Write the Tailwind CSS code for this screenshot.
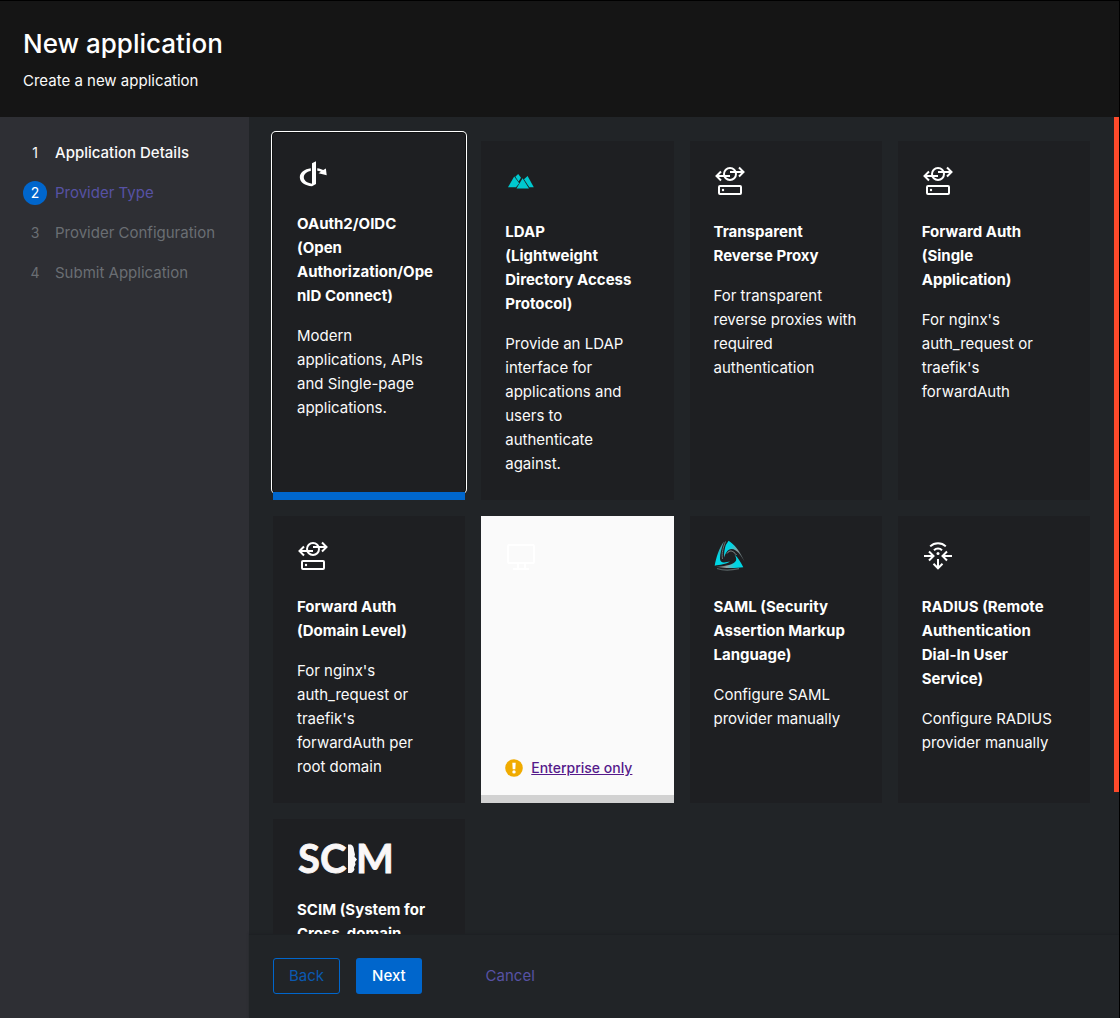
<!DOCTYPE html>
<html lang="en">
<head>
<meta charset="utf-8">
<meta name="viewport" content="width=device-width, initial-scale=1">
<title>New application</title>
<script src="https://cdn.jsdelivr.net/npm/@tailwindcss/browser@4"></script>
</head>
<body class="flex h-screen flex-col overflow-hidden border-t border-r border-black bg-[#212427] font-['Inter',sans-serif] text-[15px] leading-6 text-[#fafafa]">

<svg class="hidden" aria-hidden="true">
  <symbol id="proxy" viewBox="0 0 32 30">
    <g fill="none" stroke="#fff" stroke-width="2">
      <circle cx="16" cy="9" r="6"/>
      <path d="M16 11H3M7 6.500L2.500 11L7 15.500M16 7H29M25 2.500L29.500 7L25 11.500"/>
      <rect x="5" y="21" width="22" height="8" rx="1"/>
    </g>
    <circle cx="9" cy="25" r="1.200" fill="#fff"/>
  </symbol>
</svg>

<header class="bg-[#151515] px-[23px] pt-6 pb-6">
  <h1 class="text-[26px] leading-[38px] font-medium text-white">New application</h1>
  <p class="mt-1.5">Create a new application</p>
</header>

<div class="flex min-h-0 flex-1">
  <nav class="w-[249px] shrink-0 bg-[#2e2f34] px-[23px] pt-6" aria-label="Steps">
    <ol class="flex flex-col gap-4">
      <li class="flex items-center gap-2 font-medium"><span class="w-6 text-center text-sm font-normal">1</span><a href="#details">Application Details</a></li>
      <li class="flex items-center gap-2"><span class="flex size-6 items-center justify-center rounded-full bg-[#06c] text-sm text-white">2</span><a href="#type" aria-current="step" class="text-[#5752a4]">Provider Type</a></li>
      <li class="flex items-center gap-2 text-[#6a6e73]"><span class="w-6 text-center text-sm">3</span>Provider Configuration</li>
      <li class="flex items-center gap-2 text-[#6a6e73]"><span class="w-6 text-center text-sm">4</span>Submit Application</li>
    </ol>
  </nav>

  <main class="flex min-w-0 flex-1 flex-col">
    <div class="flex min-h-0 flex-1">
      <div class="min-w-0 flex-1 overflow-y-auto p-6 [scrollbar-width:none]">
        <div class="grid grid-cols-2 gap-4 wrap-anywhere lg:grid-cols-4">

          <label class="relative -mt-2 flex flex-col">
            <input type="radio" name="provider" class="sr-only" checked>
            <span class="block flex-1 rounded-[3px] bg-[#1e1f22] px-6 pt-6 shadow-[0_0_0_1px_#101112,0_0_0_2px_#fff]">
              <svg class="h-[31px] w-8" viewBox="0 0 32 31" fill="#fff" aria-hidden="true">
                <path d="M15 6.300L19 4.300V27L15 29.300Z"/>
                <path d="M15 29.300C8 28.800 2.800 25.500 2.800 20.300C2.800 15.500 7.500 12 13.800 11.300V13.900C9.500 14.700 6.800 17 6.800 20.300C6.800 23.700 10 26 15 26.700Z"/>
                <path d="M20.300 11.300C22.700 11.600 24.600 12.200 26.200 13.100L28.900 11.600L29.700 18.300L21.500 16.200L23.900 14.800C22.900 14.300 21.600 13.900 20.300 13.800Z"/>
              </svg>
              <b class="mt-6 block text-white">OAuth2/OIDC (Open Authorization/OpenID Connect)</b>
              <span class="mt-4 block">Modern applications, APIs and Single-page applications.</span>
            </span>
            <span class="relative h-2 bg-[#06c]"></span>
          </label>

          <label class="relative block bg-[#1e1f22] p-6">
            <input type="radio" name="provider" class="sr-only">
            <svg class="h-[31px] w-8" viewBox="0 0 32 31" fill="#00c8cf" aria-hidden="true">
              <path d="M3 22.200L9.200 11.600L14.200 18.300L11 22.200Z"/>
              <path d="M10.300 11.800L13.200 8.900L16 12.800L13.600 16.500Z"/>
              <path d="M11.500 23.600L17.600 13.300L24 23.600Z"/>
              <path d="M19 14.200L22.600 10.900L28.800 22.200H24.300Z"/>
            </svg>
            <b class="mt-6 block text-white">LDAP<br>(Lightweight Directory Access Protocol)</b>
            <span class="mt-4 block">Provide an LDAP interface for applications and users to authenticate against.</span>
          </label>

          <label class="relative block bg-[#1e1f22] p-6">
            <input type="radio" name="provider" class="sr-only">
            <svg class="h-[31px] w-8" aria-hidden="true"><use href="#proxy" width="32" height="30"/></svg>
            <b class="mt-6 block text-white">Transparent Reverse Proxy</b>
            <span class="mt-4 block">For transparent reverse proxies with required authentication</span>
          </label>

          <label class="relative block bg-[#1e1f22] p-6">
            <input type="radio" name="provider" class="sr-only">
            <svg class="h-[31px] w-8" aria-hidden="true"><use href="#proxy" width="32" height="30"/></svg>
            <b class="mt-6 block text-white">Forward Auth (Single Application)</b>
            <span class="mt-4 block">For nginx's auth_request or traefik's forwardAuth</span>
          </label>

          <label class="relative block bg-[#1e1f22] p-6">
            <input type="radio" name="provider" class="sr-only">
            <svg class="h-[31px] w-8" aria-hidden="true"><use href="#proxy" width="32" height="30"/></svg>
            <b class="mt-6 block text-white">Forward Auth (Domain Level)</b>
            <span class="mt-4 block">For nginx's auth_request or traefik's forwardAuth per root domain</span>
          </label>

          <div class="flex flex-col border-b-8 border-[#d2d2d2] bg-[#fafafa] px-6 pt-6 pb-[15px]">
            <svg class="h-8 w-8" viewBox="0 0 32 32" fill="none" stroke="#fff" stroke-width="2" aria-hidden="true">
              <rect x="3" y="5" width="26" height="18" rx="1"/>
              <path d="M13 23V29M20 23V29M8 29H24"/>
            </svg>
            <div class="mt-auto flex items-center gap-2">
              <svg class="size-[18px]" viewBox="0 0 18 18" aria-hidden="true">
                <circle cx="9" cy="9" r="8.800" fill="#f0ab00"/>
                <path d="M7.300 3.700H10.700L10.300 10.300H7.700Z" fill="#fff"/>
                <circle cx="9" cy="12.900" r="1.700" fill="#fff"/>
              </svg>
              <a href="#enterprise" class="text-sm leading-6 font-medium whitespace-nowrap text-[#551a8b] underline">Enterprise only</a>
            </div>
          </div>

          <label class="relative block bg-[#1e1f22] p-6">
            <input type="radio" name="provider" class="sr-only">
            <svg class="h-[31px] w-8" viewBox="0 0 32 31" aria-hidden="true">
              <defs>
                <linearGradient id="ga" x1="0" y1="1" x2=".6" y2="0"><stop offset=".4" stop-color="#00d5e4"/><stop offset="1" stop-color="#6f8486"/></linearGradient>
                <linearGradient id="gb" x1="0" y1="0" x2="1" y2="1"><stop offset=".3" stop-color="#00d5e4"/><stop offset=".55" stop-color="#8aa0a1"/><stop offset="1" stop-color="#43494c"/></linearGradient>
                <linearGradient id="gc" x1="1" y1="0" x2="0" y2="0"><stop offset=".3" stop-color="#00d5e4"/><stop offset=".6" stop-color="#93a5a6"/><stop offset="1" stop-color="#34393c"/></linearGradient>
              </defs>
              <path d="M.7 25.800C2 18 5 8 10 1.500C7.500 8 6 14 6 18.500C6 21 7.500 22.500 10 22.500L16 21.500C12 24.500 6 24.500 .7 25.800Z" fill="url(#ga)"/>
              <path d="M11.500 1.500C9 8 7.500 13 8.500 19" fill="none" stroke="#717b7d" stroke-width=".9"/>
              <path d="M11.800 5L14.600 .700C20 4 26 11 30.700 21.800C27 15.500 22.500 8.700 17.500 9C13.500 9.300 12 12.500 10 17.500C10 12.500 10.500 9 11.800 5Z" fill="url(#gb)"/>
              <path d="M13 13.500C15.500 9.500 19 10.500 22.500 15" fill="none" stroke="#9aa5a6" stroke-width=".8"/>
              <path d="M20.500 14.500C23.500 17 26.500 21.500 29.300 27.300C21 28.300 10 28.500 1.500 26.700C9 26.500 17 25.500 21 22C23 20 22.500 17.500 20.500 14.500Z" fill="url(#gc)"/>
              <path d="M3 28.500C9 30.500 18 30.200 25 28.600" fill="none" stroke="#596466" stroke-width="1.200"/>
            </svg>
            <b class="mt-6 block text-white">SAML (Security Assertion Markup Language)</b>
            <span class="mt-4 block">Configure SAML provider manually</span>
          </label>

          <label class="relative block bg-[#1e1f22] p-6">
            <input type="radio" name="provider" class="sr-only">
            <svg class="h-[31px] w-8" viewBox="0 0 32 31" aria-hidden="true">
              <path d="M2 16H11.500M7 11.500L11.500 16L7 20.500M30 16H20.500M25 11.500L20.500 16L25 20.500M16 19V28M11.500 23.800L16 28.300L20.500 23.800M8.200 6.400C12.500 2.200 19.500 2.200 23.800 6.400M12 10.200C14.200 8 17.800 8 20 10.200" fill="none" stroke="#fff" stroke-width="2"/>
              <circle cx="16" cy="13.400" r="1.500" fill="#fff"/>
            </svg>
            <b class="mt-6 block text-white">RADIUS (Remote Authentication Dial-In User Service)</b>
            <span class="mt-4 block">Configure RADIUS provider manually</span>
          </label>

          <label class="relative block bg-[#1e1f22] p-6">
            <input type="radio" name="provider" class="sr-only">
            <svg class="h-[31px] w-24 overflow-visible font-['Lato',sans-serif] text-[40px] font-bold" viewBox="0 0 96 31" fill="#faf7f7" stroke="#faf7f7" stroke-width=".8" role="img" aria-label="SCIM">
              <text x="1" y="30">S</text>
              <text x="23" y="30">C</text>
              <path d="M51 1.500H54C56 2.500 57 4.500 57 7.500L58 11.500L57.500 13.500L60 16.500L58 19L58.500 21.500L57 24.500L57.500 26.500C56.500 28.500 55.500 30 53.500 30H51Z" stroke="none"/>
              <text x="59" y="30">M</text>
            </svg>
            <b class="mt-6 block text-white">SCIM (System for Cross-domain Identity Management)</b>
            <span class="mt-4 block">Configure SCIM provider manually</span>
          </label>

        </div>
      </div>
      <div class="w-[5px] shrink-0"><div class="bg-[#ff4a2b]" style="height:82.6%"></div></div>
    </div>

    <footer class="flex items-center border-t border-[#1d2023] px-6 pt-[23px] pb-6 shadow-[0_-1px_2px_#1d202380]">
      <button type="button" class="h-9 rounded-[3px] border border-[#06c] px-[15px] text-[#0b59b0]">Back</button>
      <button type="button" class="ml-4 h-9 rounded-[3px] bg-[#06c] px-4 font-medium text-white">Next</button>
      <button type="button" class="ml-12 h-9 px-4 text-[#5752a4]">Cancel</button>
    </footer>
  </main>
</div>
</body>
</html>
